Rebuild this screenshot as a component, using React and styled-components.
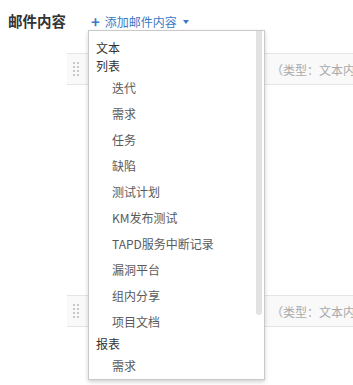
import React from "react";
import styled, { createGlobalStyle } from "styled-components";

const GlobalStyle = createGlobalStyle`
    body {
        margin: 0;
        background: #fff;
        font-family: "Noto Sans CJK SC", "Noto Sans", sans-serif;
        overflow: hidden;
    }
`;

const Page = styled.div`
    position: relative;
    width: 353px;
    height: 385px;
    overflow: hidden;
`;

const Header = styled.div`
    display: flex;
    align-items: center;
    padding: 11px 8px 0;
    height: 20px;
`;

const Title = styled.div`
    font-size: 14.5px;
    font-weight: bold;
    color: #333;
    line-height: 20px;
    width: 60px;
`;

const AddButton = styled.div`
    position: relative;
    display: flex;
    align-items: center;
    margin-left: 23px;
    color: #3b79c4;
    font-size: 12px;
    line-height: 20px;
    margin-top: 2px;
    .plus {
        font-size: 15px;
        font-weight: bold;
        margin-right: 5px;
        line-height: 20px;
    }
    .caret {
        margin-left: 6px;
        width: 0;
        height: 0;
        border-left: 3.5px solid transparent;
        border-right: 3.5px solid transparent;
        border-top: 4px solid #3b79c4;
    }
`;

const Dropdown = styled.div`
    position: absolute;
    left: -3px;
    top: 18px;
    width: 175px;
    height: 348px;
    background: #fff;
    border: 1px solid #c9c9c9;
    box-shadow: 0 2px 4px rgba(0, 0, 0, 0.18);
    overflow: hidden;
    z-index: 10;
`;

const ScrollThumb = styled.div`
    position: absolute;
    right: 2px;
    top: 0;
    width: 6px;
    height: 284px;
    background: #e2e2e2;
    border-radius: 0 0 3px 3px;
`;

const MenuList = styled.div`
    padding: 8px 0 0;
`;

const GroupLabel = styled.div`
    padding-left: 7px;
    height: 18px;
    line-height: 18px;
    font-size: 12px;
    color: #333;
`;

const MenuItem = styled.div`
    padding-left: 23px;
    height: 26px;
    line-height: 26px;
    font-size: 12px;
    color: #5a5a5a;
`;

const List = styled.div`
    margin: 22px 0 0 67px;
`;

const Section = styled.div`
    height: 242px;
`;

const Row = styled.div`
    display: flex;
    align-items: center;
    height: 30px;
    background: #f9f9f9;
    border-top: 1px solid #e4e4e4;
    border-bottom: 1px solid #e4e4e4;
    white-space: nowrap;
`;

const Handle = styled.svg`
    margin-left: 6px;
    width: 6px;
    height: 14px;
    flex: none;
`;

const Name = styled.div`
    width: 192px;
    flex: none;
`;

const TypeLabel = styled.div`
    font-size: 12px;
    color: #aaa;
`;

const menu = [
    { label: "文本" },
    { label: "列表", items: ["迭代", "需求", "任务", "缺陷", "测试计划", "KM发布测试", "TAPD服务中断记录", "漏洞平台", "组内分享", "项目文档"] },
    { label: "报表", items: ["需求"] },
];

function DragHandle() {
    const dots = [];
    for (let r = 0; r < 4; r++) {
        for (let c = 0; c < 2; c++) {
            dots.push(<rect key={r + "-" + c} x={c * 4} y={r * 4} width="2" height="2" fill="#c8c8c8" />);
        }
    }
    return <Handle viewBox="0 0 6 14">{dots}</Handle>;
}

export default function App() {
    return (
        <Page>
            <GlobalStyle />
            <Header>
                <Title>邮件内容</Title>
                <AddButton>
                    <span className="plus">+</span>
                    添加邮件内容
                    <span className="caret" />
                    <Dropdown>
                        <MenuList>
                            {menu.map((g) => (
                                <React.Fragment key={g.label}>
                                    <GroupLabel>{g.label}</GroupLabel>
                                    {(g.items || []).map((it, i) => (
                                        <MenuItem key={i}>{it}</MenuItem>
                                    ))}
                                </React.Fragment>
                            ))}
                        </MenuList>
                        <ScrollThumb />
                    </Dropdown>
                </AddButton>
            </Header>
            <List>
                {[0, 1].map((i) => (
                    <Section key={i}>
                        <Row>
                            <DragHandle />
                            <Name />
                            <TypeLabel>（类型：文本内容）</TypeLabel>
                        </Row>
                    </Section>
                ))}
            </List>
        </Page>
    );
}
